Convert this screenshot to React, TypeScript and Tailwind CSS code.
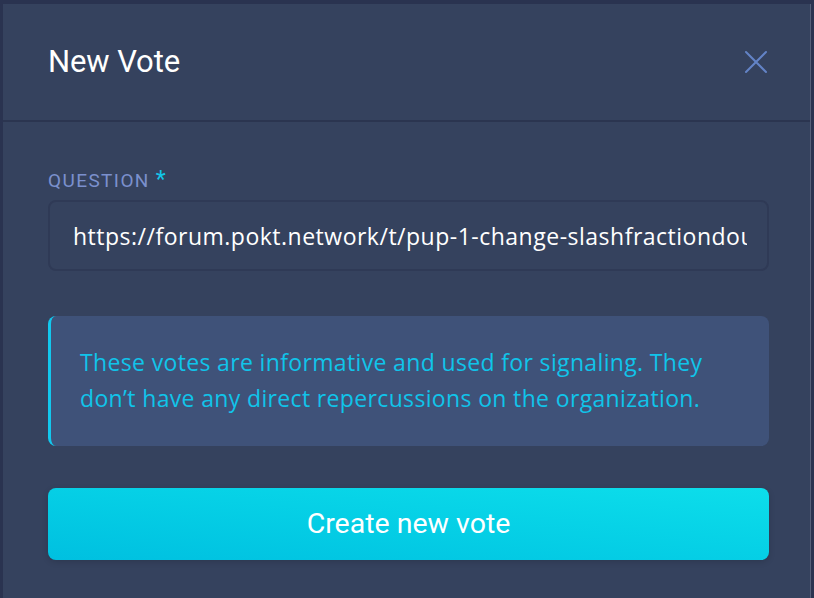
import React from 'react';

const App: React.FC = () => {
  return (
    <div className="w-[814px] h-[598px] bg-[#2a3350] pt-[4px] pl-[3px] pr-[3px] overflow-hidden font-['Roboto',sans-serif]">
      <div className="h-full bg-[#35425e] border-r border-[#56607a] flex flex-col">
        {/* Header */}
        <div className="h-[118px] shrink-0 flex items-center justify-between pl-[45px] pr-[42px] border-b-2 border-[#2b3550]">
          <h1 className="text-[31px] leading-none text-white tracking-[-0.1px] pb-[2px]">New Vote</h1>
          <button className="text-[#6383c6]">
            <svg width="24" height="24" viewBox="0 0 24 24" fill="none" stroke="currentColor" strokeWidth="2" strokeLinecap="round">
              <path d="M2 2L22 22M22 2L2 22" />
            </svg>
          </button>
        </div>

        {/* Body */}
        <div className="flex flex-col pl-[45px] pr-[41px] pt-[49px]">
          <label className="block h-[19px] text-[19px] leading-[19px] tracking-[1.4px] text-[#7b90cd] uppercase whitespace-nowrap">
            Question<span className="ml-[6px] text-[23px] leading-[0] text-[#12c6e8] tracking-normal">*</span>
          </label>

          <input
            readOnly
            value="https://forum.pokt.network/t/pup-1-change-slashfractiondoublesign"
            className="mt-[10px] h-[71px] w-full rounded-[8px] border-2 border-[#2f3a56] bg-[#35425e] pl-[23px] pr-[20px] text-[23px] tracking-[0.5px] text-white outline-none font-['Open_Sans',sans-serif]"
          />

          <div className="mt-[45px] h-[130px] rounded-[8px] border-l-[3px] border-[#12c8ee] bg-[#3f5279] pl-[29px] pr-[24px] flex items-center">
            <p className="text-[23px] leading-[36px] tracking-[0.35px] text-[#10c4ea] font-['Open_Sans',sans-serif] pb-[2px]">
              These votes are informative and used for signaling. They don’t have any direct repercussions on the organization.
            </p>
          </div>

          <button className="mt-[42px] h-[72px] w-full rounded-[8px] bg-gradient-to-tr from-[#00c0e0] to-[#0ddeeb] text-white text-[28.5px] shadow-[0_2px_6px_rgba(0,0,0,0.15)]">
            Create new vote
          </button>
        </div>
      </div>
    </div>
  );
};

export default App;
